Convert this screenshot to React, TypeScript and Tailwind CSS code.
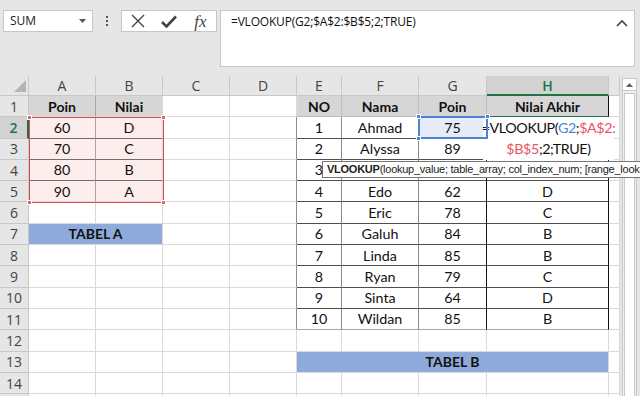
import React from "react";

type Cell = {
  t?: string;
  bold?: boolean;
  bg?: string;
  r?: string;
  b?: string;
  span?: string;
  skip?: boolean;
};

const COLS = ["A", "B", "C", "D", "E", "F", "G", "H", "I"];

const tableA = [
  ["60", "D"],
  ["70", "C"],
  ["80", "B"],
  ["90", "A"],
];

const tableB = [
  ["1", "Ahmad", "75", ""],
  ["2", "Alyssa", "89", ""],
  ["3", "", "", ""],
  ["4", "Edo", "62", "D"],
  ["5", "Eric", "78", "C"],
  ["6", "Galuh", "84", "B"],
  ["7", "Linda", "85", "B"],
  ["8", "Ryan", "79", "C"],
  ["9", "Sinta", "64", "D"],
  ["10", "Wildan", "85", "B"],
];

function cellAt(row: number, col: number): Cell {
  // header row of both tables
  if (row === 1) {
    if (col === 0) return { t: "Poin", bold: true, bg: "bg-[#d6d6d6]", r: "border-r-[#a6a6a6]" };
    if (col === 1) return { t: "Nilai", bold: true, bg: "bg-[#d6d6d6]" };
    if (col === 4) return { t: "NO", bold: true, bg: "bg-[#d6d6d6]", r: "border-r-[#bdbdbd]", b: "border-b-[#bdbdbd]" };
    if (col === 5) return { t: "Nama", bold: true, bg: "bg-[#d6d6d6]", r: "border-r-[#bdbdbd]", b: "border-b-[#bdbdbd]" };
    if (col === 6) return { t: "Poin", bold: true, bg: "bg-[#d6d6d6]", r: "border-r-[#bdbdbd]", b: "border-b-[#bdbdbd]" };
    if (col === 7) return { t: "Nilai Akhir", bold: true, bg: "bg-[#d6d6d6]", r: "border-r-[#111111]", b: "border-b-[#217346]" };
  }
  if (row >= 2 && row <= 5 && col <= 1) {
    return {
      t: tableA[row - 2][col],
      bg: "bg-[#fdeded]",
      r: col === 0 ? "border-r-[#a6a6a6]" : undefined,
      b: row < 5 ? "border-b-[#6f6f6f]" : undefined,
    };
  }
  if (row === 7 && col === 0) return { t: "TABEL A", bold: true, bg: "bg-[#8eaadb]", span: "col-span-2" };
  if (row === 7 && col === 1) return { skip: true };
  if (row === 13 && col === 4) return { t: "TABEL B", bold: true, bg: "bg-[#8eaadb]", span: "col-span-4" };
  if (row === 13 && col > 4 && col < 8) return { skip: true };
  if (row >= 2 && row <= 11) {
    if (col === 3) return { r: "border-r-[#8c8c8c]" };
    if (col >= 4 && col <= 7) {
      const bottom = row === 11 ? "border-b-[#a6a6a6]" : "border-b-[#4d4d4d]";
      const right = col >= 6 ? "border-r-[#111111]" : "border-r-[#8c8c8c]";
      return {
        t: tableB[row - 2][col - 4],
        r: right,
        b: bottom,
        bg: row === 2 && col === 6 ? "bg-[#e6ecf7]" : undefined,
      };
    }
  }
  return {};
}

function Toolbar() {
  return (
    <div className="h-[76px] flex items-start pt-[10px] pl-[3px]">
      <div className="w-[90px] h-[22px] bg-white border border-[#c6c6c6] flex items-center justify-between pl-[6px] pr-[6px]">
        <span className="text-[12px] text-[#222] font-['Open_Sans',sans-serif]">SUM</span>
        <svg width="7" height="4" viewBox="0 0 7 4">
          <path d="M0 0 L7 0 L3.5 4 Z" fill="#555" />
        </svg>
      </div>
      <div className="w-[28px] h-[22px] flex flex-col items-center justify-center gap-[2px]">
        <div className="w-[2px] h-[2px] bg-[#555]" />
        <div className="w-[2px] h-[2px] bg-[#555]" />
        <div className="w-[2px] h-[2px] bg-[#555]" />
      </div>
      <div className="w-[96px] h-[22px] bg-white border border-[#c6c6c6] flex items-center">
        <div className="w-[32px] flex justify-center">
          <svg width="14" height="14" viewBox="0 0 14 14">
            <path d="M1 1 L13 13 M13 1 L1 13" stroke="#444" strokeWidth="1.4" />
          </svg>
        </div>
        <div className="w-[32px] flex justify-center">
          <svg width="16" height="13" viewBox="0 0 16 13">
            <path d="M1 7 L5.5 11.5 L15 1.5" stroke="#444" strokeWidth="2.6" fill="none" />
          </svg>
        </div>
        <div className="w-[32px] flex justify-center">
          <span className="italic text-[17px] leading-none text-[#444] font-['Liberation_Serif',serif]">fx</span>
        </div>
      </div>
      <div className="ml-[3px] w-[415px] h-[57px] bg-white border border-[#c6c6c6] flex justify-between pl-[10px] pr-[6px] pt-[3px]">
        <span className="text-[12px] leading-[16px] tracking-[-0.2px] text-[#111] font-['Open_Sans',sans-serif]">
          =VLOOKUP(G2;$A$2:$B$5;2;TRUE)
        </span>
        <svg width="12" height="8" viewBox="0 0 12 8" className="mt-[5px]">
          <path d="M1 7 L6 2 L11 7" stroke="#444" strokeWidth="1.6" fill="none" />
        </svg>
      </div>
    </div>
  );
}

function Sheet() {
  const rows = Array.from({ length: 15 }, (_, i) => i + 1);
  return (
    <div className="grid grid-cols-[29px_67px_67px_67px_67px_45px_77px_68px_122px_11px] grid-rows-[20px_repeat(15,21.3px)] w-[620px]">
      <div className="bg-[#e6e6e6] border-r border-b border-[#c8c8c8] relative">
        <svg width="12" height="12" viewBox="0 0 12 12" className="absolute right-[2px] bottom-[3px]">
          <path d="M12 0 L12 12 L0 12 Z" fill="#b4b4b4" />
        </svg>
      </div>
      {COLS.map((c) =>
        c === "H" ? (
          <div
            key={c}
            className="bg-[#d2d2d2] border-r border-[#c8c8c8] border-b-2 border-b-[#217346] flex items-center justify-center text-[14px] text-[#217346] font-semibold font-['Open_Sans',sans-serif]"
          >
            {c}
          </div>
        ) : (
          <div
            key={c}
            className="bg-[#e6e6e6] border-r border-b border-[#c8c8c8] flex items-center justify-center text-[14px] text-[#444] font-['Open_Sans',sans-serif]"
          >
            {c === "I" ? "" : c}
          </div>
        )
      )}
      {rows.map((r) => (
        <React.Fragment key={r}>
          {r === 2 ? (
            <div className="bg-[#d2d2d2] border-b border-b-[#c8c8c8] border-r-2 border-r-[#217346] flex items-center justify-center text-[14px] text-[#217346] font-semibold font-['Open_Sans',sans-serif]">
              {r}
            </div>
          ) : (
            <div className="bg-[#e6e6e6] border-r border-b border-[#c8c8c8] flex items-center justify-center text-[14px] text-[#444] font-['Open_Sans',sans-serif]">
              {r < 15 ? r : ""}
            </div>
          )}
          {COLS.map((_, ci) => {
            const cell = cellAt(r, ci);
            if (cell.skip) return null;
            return (
              <div
                key={ci}
                className={`${cell.span ?? ""} border-r border-b ${cell.r ?? "border-r-[#dadada]"} ${cell.b ?? "border-b-[#dadada]"} ${cell.bg ?? "bg-white"} flex items-center justify-center whitespace-nowrap overflow-hidden text-[#111] font-['Lato',sans-serif] ${cell.bold ? "font-bold text-[14px]" : "text-[14.3px]"}`}
              >
                {cell.t}
              </div>
            );
          })}
        </React.Fragment>
      ))}
    </div>
  );
}

export default function App() {
  return (
    <div className="w-[640px] h-[396px] overflow-hidden bg-[#e6e6e6] relative">
      <Toolbar />
      <div className="flex relative">
        <Sheet />
        <div className="ml-[2px] mt-[2px] w-[15px] h-[330px] border border-[#c8c8c8] bg-[#f0f0f0] flex flex-col">
          <div className="h-[12px] bg-white border-b border-[#c8c8c8] flex items-center justify-center">
            <svg width="7" height="4" viewBox="0 0 7 4">
              <path d="M0 4 L7 4 L3.5 0 Z" fill="#606060" />
            </svg>
          </div>
          <div className="flex-1 bg-white mx-[1px] mt-[2px] border border-[#c8c8c8]" />
        </div>

        {/* range highlight for $A$2:$B$5 */}
        <div className="absolute left-[29px] top-[41px] w-[135px] h-[86px] border border-[#e04a4f]" />
        <div className="absolute left-[27px] top-[39px] w-[5px] h-[5px] bg-[#e8656a] border border-white" />
        <div className="absolute left-[161px] top-[39px] w-[5px] h-[5px] bg-[#e8656a] border border-white" />
        <div className="absolute left-[27px] top-[124px] w-[5px] h-[5px] bg-[#e8656a] border border-white" />
        <div className="absolute left-[161px] top-[124px] w-[5px] h-[5px] bg-[#e8656a] border border-white" />

        {/* in-cell edit of H2 */}
        <div className="absolute left-[483px] top-[41px] w-[131px] h-[43px] bg-white flex flex-col items-center text-[14.3px] leading-[21.3px] tracking-[-0.4px] text-[#111] font-['Lato',sans-serif] whitespace-nowrap">
          <div>
            =VLOOKUP(<span className="text-[#4f81d9]">G2</span>;<span className="text-[#e8545f]">$A$2:</span>
          </div>
          <div>
            <span className="text-[#e8545f]">$B$5</span>;2;TRUE)
          </div>
        </div>

        {/* G2 reference box */}
        <div className="absolute left-[418px] top-[40px] w-[70px] h-[23px] border-2 border-[#4f81d9]" />
        <div className="absolute left-[416px] top-[38px] w-[5px] h-[5px] bg-[#4f81d9] border border-white" />
        <div className="absolute left-[485px] top-[38px] w-[5px] h-[5px] bg-[#4f81d9] border border-white" />
        <div className="absolute left-[416px] top-[60px] w-[5px] h-[5px] bg-[#4f81d9] border border-white" />

        {/* function tooltip */}
        <div className="absolute left-[322px] top-[85px] h-[17px] pl-[4px] pr-[4px] bg-white border border-[#767676] flex items-center whitespace-nowrap text-[11px] tracking-[-0.25px] text-[#222] font-['Liberation_Sans',sans-serif] z-10">
          <span className="font-bold">VLOOKUP</span>(lookup_value; table_array; col_index_num; [range_lookup])
        </div>
      </div>
    </div>
  );
}
